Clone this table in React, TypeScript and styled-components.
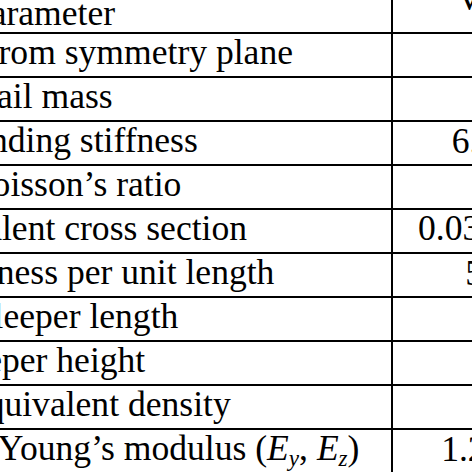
import React from "react";
import styled, { createGlobalStyle } from "styled-components";

const GlobalStyle = createGlobalStyle`
  html, body {
    margin: 0;
    padding: 0;
    background: #ffffff;
    overflow: hidden;
  }
  body {
    font-family: "Liberation Serif", "Times New Roman", serif;
    color: #000000;
  }
`;

const Sheet = styled.div`
  width: 472px;
  height: 472px;
  overflow: hidden;
`;

/* the screenshot is a crop of a wider table, so it starts left of and above the window */
const Table = styled.div`
  margin-left: -307px;
  margin-top: -30px;
  width: max-content;
  border-top: 2px solid #000;
  border-left: 2px solid #000;
`;

const Row = styled.div<{ $head?: boolean }>`
  display: grid;
  grid-template-columns: 698px 224px;
  height: ${(p) => (p.$head ? 60 : 42)}px;
  border-bottom: 2px solid #000;
`;

const Cell = styled.div<{ $valign?: "top" | "bottom"; $pad?: number }>`
  box-sizing: border-box;
  display: flex;
  justify-content: center;
  align-items: ${(p) => (p.$valign === "bottom" ? "flex-end" : "flex-start")};
  padding-top: ${(p) => p.$pad ?? 0}px;
  border-right: 2px solid #000;
  font-size: 35.6px;
  line-height: 37px;
  white-space: nowrap;
`;

const Text = styled.span`
  display: block;
`;

const Sup = styled.span`
  font-size: 0.7em;
  line-height: 1;
  vertical-align: 0.45em;
`;

const Sub = styled.span`
  font-size: 0.65em;
  line-height: 1;
  vertical-align: -0.25em;
  font-style: italic;
`;

const Var = styled.i`
  font-style: italic;
`;

type Item = { label: React.ReactNode; value: React.ReactNode };

const items: Item[] = [
  { label: "Rail distance from symmetry plane", value: "0.7" },
  { label: "Rail mass", value: "60" },
  {
    label: "Rail bending stiffness",
    value: (
      <>
        6.4·10<Sup>6</Sup>
      </>
    ),
  },
  { label: "Rail Poisson’s ratio", value: "0.3" },
  { label: "Rail equivalent cross section", value: "0.03 · 0.138" },
  {
    label: "Rail pad stiffness per unit length",
    value: (
      <>
        5·10<Sup>8</Sup>
      </>
    ),
  },
  { label: "Half sleeper length", value: "1.3" },
  { label: "Sleeper height", value: "0.2" },
  { label: "Sleeper equivalent density", value: "2.4" },
  {
    label: (
      <>
        Sleeper equivalent Young’s modulus (<Var>E</Var>
        <Sub>y</Sub>
        {", "}
        <Var>E</Var>
        <Sub>z</Sub>)
      </>
    ),
    value: (
      <>
        1.2 ·10<Sup>10</Sup>
      </>
    ),
  },
];

export default function App() {
  return (
    <>
      <GlobalStyle />
      <Sheet>
        <Table>
          <Row $head>
            <Cell $valign="bottom">
              <Text>Parameter</Text>
            </Cell>
            <Cell $pad={8}>
              <Text>Values</Text>
            </Cell>
          </Row>
          {items.map((item, i) => (
            <Row key={i}>
              <Cell>
                <Text>{item.label}</Text>
              </Cell>
              <Cell>
                <Text>{item.value}</Text>
              </Cell>
            </Row>
          ))}
        </Table>
      </Sheet>
    </>
  );
}
